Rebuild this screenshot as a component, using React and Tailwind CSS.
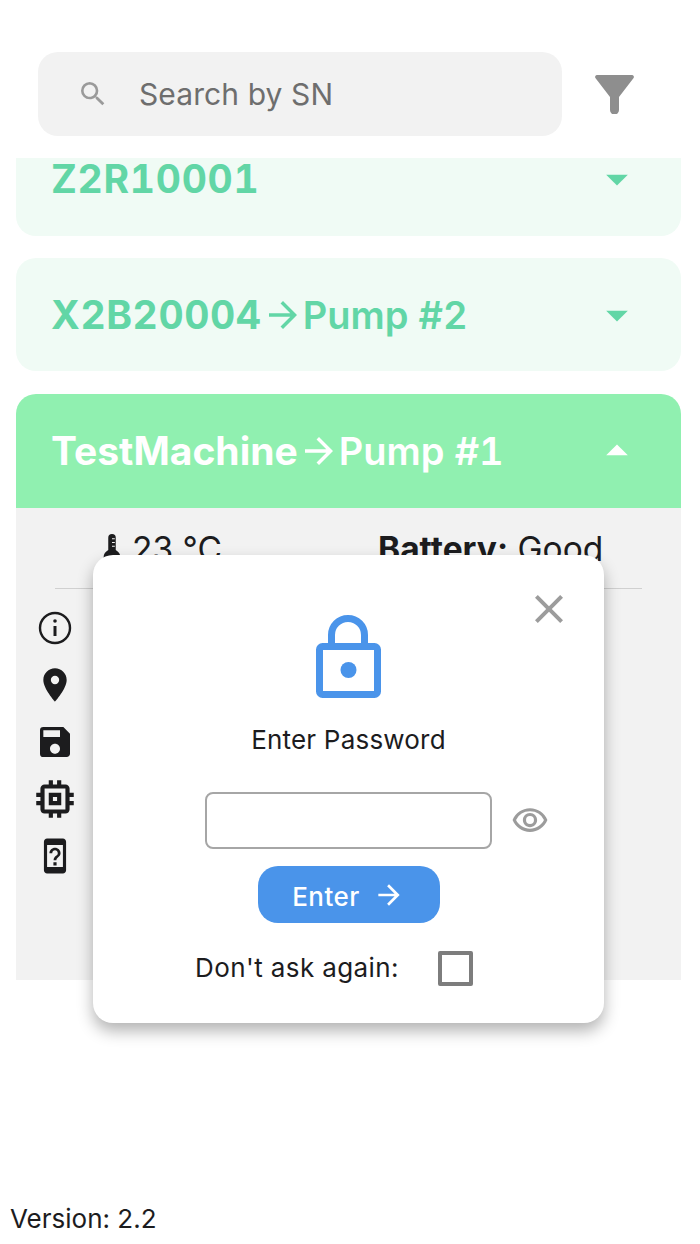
import { MdSearch, MdArrowDropDown, MdArrowDropUp, MdLocationOn, MdSave, MdOutlineMemory, MdOutlineDeviceUnknown, MdClose, MdOutlineRemoveRedEye, MdArrowForward } from 'react-icons/md'

const FONT = "font-['Inter','Noto_Sans',sans-serif]"

function Card({ sn, pump, open, className = '', snClass = '' }) {
  return (
    <div className={`flex h-[114px] items-center justify-between pl-[35px] pr-[51px] ${open ? 'rounded-t-[20px] bg-[#90f0b0] text-white' : 'rounded-[20px] bg-[#f0fbf5] text-[#62d6a6]'} ${className}`}>
      <div className="flex items-center text-[38px] leading-[40px] tabular-nums">
        <span className={`text-[39px] font-bold ${snClass}`}>{sn}</span>
        {pump && (
          <>
            <MdArrowForward size={42} className="mr-[-1px]" />
            <span className="font-semibold">{pump}</span>
          </>
        )}
      </div>
      {open ? <MdArrowDropUp size={52} className="mr-[-13px]" /> : <MdArrowDropDown size={52} className="mr-[-13px]" />}
    </div>
  )
}

export default function App() {
  return (
    <div className={`${FONT} relative flex h-[1244px] w-[700px] flex-col overflow-hidden bg-white text-[#1c1c1e]`}>
      <div className="flex items-center pl-[38px] pt-[52px]">
        <div className="flex h-[84px] w-[524px] shrink-0 items-center rounded-[20px] bg-[#f2f2f2] pl-[39px]">
          <MdSearch size={32} className="text-[#9a9a9a]" />
          <span className="ml-[30px] text-[30px] tracking-[0.1px] text-[#6e6e6e]">Search by SN</span>
        </div>
        <svg width="39" height="39" viewBox="0 0 39 39" className="ml-[33px] text-[#8e8e8e]">
          <path d="M2 0H37a2 2 0 0 1 1.6 3L24 22V35a4.5 4.5 0 0 1-9 0V22L.4 3A2 2 0 0 1 2 0z" fill="currentColor" />
        </svg>
      </div>

      <div className="mt-[22px] flex h-[822px] flex-col gap-[22px] overflow-hidden pl-[16px] pr-[19px]">
        <Card sn="Z2R10001" className="mt-[-36px]" snClass="tracking-[0.7px]" />
        <Card sn="X2B20004" pump="Pump #2" className="pt-[2px]" snClass="tracking-[0.6px]" />
        <div className="mt-[1px]">
          <Card sn="TestMachine" pump="Pump #1" open />
          <div className="h-[472px] bg-[#f2f2f2]">
            <div className="flex h-[80px] items-center pt-[2px] text-[33.5px] leading-[40px]">
              <div className="ml-[85px] flex w-[277px] items-center">
                <svg width="22" height="30" viewBox="0 0 22 32" className="mr-[9px] text-[#1c1c1e]">
                  <path d="M7 4a4 4 0 0 1 8 0v13c3 2 5 4 5 8 0 4-4 6-9 6s-9-2-9-6c0-4 2-6 5-8z" fill="currentColor" />
                  <path d="M11 5h3M11 9h3M11 13h3" stroke="#f2f2f2" strokeWidth="1.2" />
                </svg>
                <span>23 °C</span>
              </div>
              <div>
                <span className="font-bold">Battery:</span> Good
              </div>
            </div>
            <div className="mx-[39px] h-[1px] bg-[#d0d0d0]" />
            <div className="ml-[19px] mt-[19px] flex w-[40px] flex-col items-center gap-[17px] text-[#1c1c1e]">
              <svg width="40" height="40" viewBox="0 0 40 40" fill="none" stroke="currentColor">
                <circle cx="20" cy="20" r="15" strokeWidth="2.4" />
                <path d="M20 18v10" strokeWidth="3" />
                <circle cx="20" cy="13" r="1.8" fill="currentColor" stroke="none" />
              </svg>
              <MdLocationOn size={40} />
              <MdSave size={40} />
              <MdOutlineMemory size={50} className="my-[-5px]" />
              <MdOutlineDeviceUnknown size={38} className="my-[1px]" />
            </div>
          </div>
        </div>
      </div>

      <div className="mt-auto pb-[9px] pl-[10px] text-[26px] leading-[32px] text-[#1c1c1e]">Version: 2.2</div>

      <div className="absolute left-[93px] top-[555px] flex h-[468px] w-[511px] flex-col items-center rounded-[20px] bg-white pt-[60px] shadow-[0_8px_16px_rgba(0,0,0,0.3)]">
        <MdClose size={48} className="absolute right-[31px] top-[30px] text-[#9c9c9c]" />
        <svg width="65" height="83" viewBox="0 0 65 83" fill="none" stroke="#4a94ea" strokeWidth="7">
          <rect x="3.5" y="31.5" width="58" height="48" rx="3" />
          <path d="M15.5 30V20a16.5 16.5 0 0 1 33 0V30" />
          <circle cx="32.5" cy="55" r="8" fill="#4a94ea" stroke="none" />
        </svg>
        <div className="mt-[26px] text-[26px] leading-[32px] tracking-[0.2px]">Enter Password</div>
        <div className="relative mt-[36px] h-[57px] w-[287px] rounded-[8px] border-2 border-[#a6a6a6]">
          <MdOutlineRemoveRedEye size={38} className="absolute left-[304px] top-[7px] text-[#9c9c9c]" />
        </div>
        <div className="mt-[17px] flex h-[57px] w-[182px] items-center justify-center rounded-[20px] bg-[#4a94ea] pt-[3px] text-[26px] font-medium tracking-[0.5px] text-white">
          Enter
          <MdArrowForward size={32} className="ml-[13px] mt-[-3px]" />
        </div>
        <div className="mr-[29px] mt-[27px] flex items-center text-[26px] leading-[36px] tracking-[0.4px]">
          <span>Don't ask again:</span>
          <div className="ml-[39px] h-[35px] w-[35px] rounded-[2px] border-[4px] border-[#7d7d7d]" />
        </div>
      </div>
    </div>
  )
}
